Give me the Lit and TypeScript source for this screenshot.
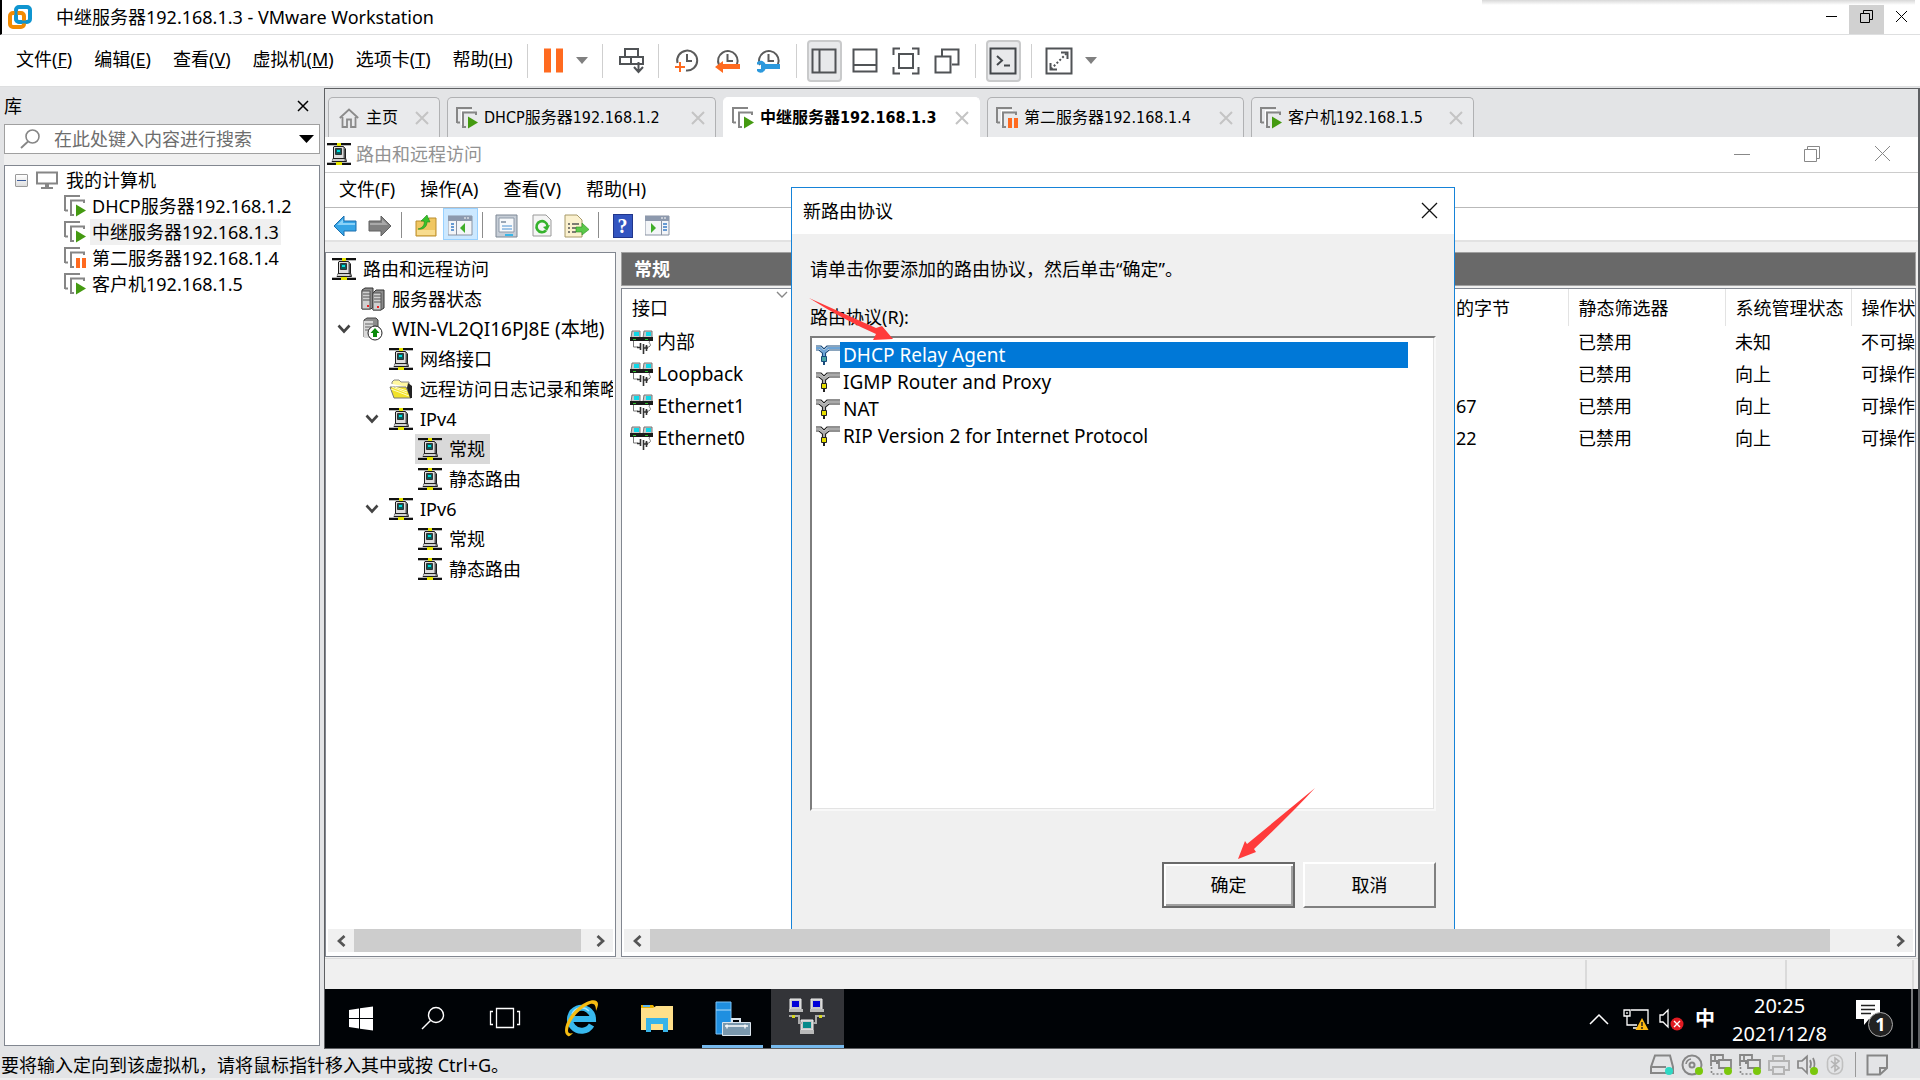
import { LitElement, html, svg, css, nothing } from "lit";
import { customElement, state } from "lit/decorators.js";
import { classMap } from "lit/directives/class-map.js";

type Vm = { name: string; paused?: boolean; width: number };
type Node = { text: string; level: number; icon: string; open?: boolean; id: number };

const VMS: Vm[] = [
  { name: "DHCP服务器192.168.1.2", width: 269 },
  { name: "中继服务器192.168.1.3", width: 257 },
  { name: "第二服务器192.168.1.4", paused: true, width: 257 },
  { name: "客户机192.168.1.5", width: 223 },
];

const NODES: Node[] = [
  { id: 0, text: "路由和远程访问", level: 0, icon: "route" },
  { id: 1, text: "服务器状态", level: 1, icon: "servers" },
  { id: 2, text: "WIN-VL2QI16PJ8E (本地)", level: 1, icon: "host", open: true },
  { id: 3, text: "网络接口", level: 2, icon: "route" },
  { id: 4, text: "远程访问日志记录和策略", level: 2, icon: "folder" },
  { id: 5, text: "IPv4", level: 2, icon: "route", open: true },
  { id: 6, text: "常规", level: 3, icon: "route" },
  { id: 7, text: "静态路由", level: 3, icon: "route" },
  { id: 8, text: "IPv6", level: 2, icon: "route", open: true },
  { id: 9, text: "常规", level: 3, icon: "route" },
  { id: 10, text: "静态路由", level: 3, icon: "route" },
];

const IFACES = [
  ["内部", "", "已禁用", "未知", "不可操作"],
  ["Loopback", "", "已禁用", "向上", "可操作"],
  ["Ethernet1", "67", "已禁用", "向上", "可操作"],
  ["Ethernet0", "22", "已禁用", "向上", "可操作"],
];

const PROTOCOLS = ["DHCP Relay Agent", "IGMP Router and Proxy", "NAT", "RIP Version 2 for Internet Protocol"];

const pic = (w: number, h: number, body: unknown) =>
  html`<svg width=${w} height=${h} viewBox="0 0 ${w} ${h}" fill="none" aria-hidden="true">${body}</svg>`;

const logo = pic(24, 24, svg`
  <rect x="8" y="2" width="14" height="15" rx="3" stroke="#0f95d0" stroke-width="4"/>
  <rect x="2" y="8" width="14" height="14" rx="3" stroke="#f38b00" stroke-width="4"/>
  <path d="M8 6v8a3 3 0 0 0 3 3h7" stroke="#0f95d0" stroke-width="3"/>`);

const cross = (s: number, c: string, w = 1) =>
  pic(s, s, svg`<path d="M1 1L${s - 1} ${s - 1}M${s - 1} 1L1 ${s - 1}" stroke=${c} stroke-width=${w}/>`);
const dash = (s: number, c: string) =>
  pic(s, s, svg`<path d="M0 ${Math.floor(s / 2)}.5H${s}" stroke=${c}/>`);
const restore = (s: number, c: string) =>
  pic(s, s, svg`<path d="M.5 3.5H${s - 4}.5V${s - 1}.5H.5ZM3.5 3V.5H${s - 1}.5V${s - 4}.5H${s - 4}" stroke=${c}/>`);
const triangle = (w: number, h: number, c: string) =>
  pic(w, h, svg`<path d="M0 0H${w}L${w / 2} ${h}Z" fill=${c}/>`);
const chevron = (c: string) =>
  pic(14, 10, svg`<path d="M1.5 1.5L7 7.5L12.5 1.5" stroke=${c} stroke-width="2.6"/>`);

const vmIcon = (paused?: boolean) => pic(22, 22, svg`
  <path d="M1 16V1H16M1 15.500H4M7 21V5.500H21M7 20H10M20 5V8" stroke="#868686" stroke-width="2"/>
  <path d="M5 3H17V4H6V18H5Z" fill="#fff"/>
  ${paused
    ? svg`<path d="M12 11H16V21H12ZM18 11H22V21H18Z" fill="#ff6a1f"/>`
    : svg`<path d="M12 9.500L22 15.500L12 21.500Z" fill="#449a11"/>`}`);

const clock = (extra: unknown) => pic(25, 25, svg`
  <path d="M4 17A9.800 9.800 0 1 1 20 19.500" stroke="#5b5b5b" stroke-width="2"/>
  <path d="M12.500 6V13H18" stroke="#5b5b5b" stroke-width="2"/>${extra}`);

const tool: Record<string, unknown> = {
  pause: pic(20, 25, svg`<path d="M0 .500H7V24.500H0ZM12 .500H19V24.500H12Z" fill="#ff6a1f"/>`),
  send: pic(26, 26, svg`<path d="M6 1H19V9H6ZM1 9H12V16H1ZM12 9H24V16H12ZM19.500 14V23M15 19L19.500 24L24 19" stroke="#505356" stroke-width="2"/>`),
  snap: pic(25, 25, svg`
    <path d="M3.500 15A10 10 0 1 1 12 22.500" stroke="#5b5b5b" stroke-width="2"/>
    <path d="M13 6V13H18" stroke="#5b5b5b" stroke-width="2"/>
    <path d="M6 14V24M1 19H11" stroke="#ff6a1f" stroke-width="2"/>`),
  revert: clock(svg`<path d="M0 19L8 13V16H25V21H8V25Z" fill="#ff6a1f"/>`),
  manage: clock(svg`<path d="M1 14.500A5 5 0 0 1 9.500 16H24V21H9.500A5 5 0 0 1 1 23V21H5V16.500H1Z" fill="#2c99dd"/>`),
  side: pic(26, 26, svg`<path d="M1.500 1.500H24.500V24.500H1.500ZM8.500 1V25" stroke="#505356" stroke-width="2"/>`),
  bottom: pic(26, 26, svg`<path d="M1.500 1.500H24.500V23.500H1.500ZM1 17H25" stroke="#505356" stroke-width="2"/>`),
  full: pic(28, 28, svg`<path d="M1.500 8V1.500H8M20 1.500H26.500V8M26.500 20V26.500H20M8 26.500H1.500V20M7 7H21V21H7Z" stroke="#505356" stroke-width="2"/>`),
  unity: pic(26, 26, svg`<path d="M8 8V1.500H24.500V16.500H18M1.500 8.500H16.500V24.500H1.500Z" stroke="#505356" stroke-width="2"/>`),
  term: pic(28, 28, svg`<path d="M1.500 1.500H26.500V26.500H1.500Z" stroke="#43474b" stroke-width="2"/><path d="M8 9L13 13.500L8 18M15 18.500H21" stroke="#43474b" stroke-width="2"/>`),
  stretch: pic(28, 28, svg`<path d="M1.500 1.500H26.500V26.500H1.500Z" stroke="#505356" stroke-width="2"/><path d="M16 5.500H22.500V12M5.500 16V22.500H12" stroke="#505356" stroke-width="2"/><path d="M6 22L22 6" stroke="#505356" stroke-width="2" stroke-dasharray="2 2"/>`),
};

const home = pic(20, 20, svg`<path d="M.800 10L10 1.500L19.200 10M3.500 9V19H8V11.500H12V19H16.500V9" stroke="#8b8b8b" stroke-width="1.800"/>`);
const glass = (c: string, w = 2) => pic(24, 24, svg`<circle cx="15" cy="9" r="7.500" stroke=${c} stroke-width=${w}/><path d="M9.500 14.500L1 23" stroke=${c} stroke-width=${w}/>`);
const monitor = pic(22, 18, svg`<path d="M1 1.500H21V12.500H1Z" stroke="#868686" stroke-width="2"/><path d="M9 13H13V16H17V18H5V16H9Z" fill="#868686"/>`);

const route = pic(24, 22, svg`
  <path d="M0 0H24V2H0ZM0 20H24V22H0Z" fill="#111"/><path d="M0 2H24V3H0ZM0 19H24V20H0Z" fill="#b9b9b9"/>
  <path d="M10 0H14V3H10ZM9 19H15V22H9Z" fill="#e6e600"/>
  <path d="M7 3.500H16.500L18.500 6V15L19.500 18.500H5L6.500 15V4Z" fill="#9a9a9a" stroke="#1d1d1d"/>
  <path d="M7 4H16V15H7Z" fill="#dedede"/><path d="M8.500 5.500H14.500V11.500H8.500Z" fill="#0a5a5a" stroke="#333"/><path d="M10 7H13V9H10Z" fill="#0dd"/>
  <path d="M6 16H17V18H5Z" fill="#d0d0d0"/><path d="M6 15.500H18" stroke="#222"/><path d="M17.500 6V15" stroke="#555"/>`);

const icons: Record<string, unknown> = {
  route,
  servers: pic(24, 24, svg`
    <path d="M1 3L4 1H12V20L10 22H1ZM12 6L15 3H23V21L20 23H12Z" fill="#8c8c8c" stroke="#333"/>
    <path d="M1 4H9V22H1ZM12 6H20V23H12Z" fill="#d0d0d0" stroke="#555"/><path d="M2 7H9M2 10H9M2 13H9M13 9H20M13 12H20M13 15H20" stroke="#555"/>
    <path d="M6 18H8V20H6ZM16 19H18V21H16Z" fill="#e22"/>`),
  host: pic(20, 24, svg`
    <path d="M1 3L4 1H13L15 3V20H1Z" fill="#8c8c8c" stroke="#444"/><path d="M1 4H10V21H1Z" fill="#d9d9d9"/><path d="M2 7H10M2 10H8M2 13H6" stroke="#666"/>
    <circle cx="12" cy="16" r="7" fill="#fff" stroke="#222"/><path d="M12 11L16.500 16H14V20H10V16H7.500Z" fill="#0a8a0a"/>`),
  folder: pic(24, 20, svg`
    <path d="M3 5V3L5 1H10L12 3H20V8" fill="#fff7a0" stroke="#888"/>
    <path d="M1 8H17L22 19H5Z" fill="#f1e22a" stroke="#777"/><path d="M2 10L20 17M3 8L18 14M6 8L18 12" stroke="#fffbc0"/>
    <path d="M19 4L23 7V19H21L18 9Z" fill="#222"/>`),
};

const nic = pic(24, 24, svg`
  <path d="M2 1H10V8H1ZM14 1H22V8H13Z" fill="#c9c9c9" stroke="#777"/><path d="M4 2H9V6H4ZM16 2H21V6H16Z" fill="#10d8e8"/>
  <path d="M0 7H23V11H0Z" fill="#1b1b1b"/><path d="M3 9H6V10H3ZM15 9H18V10H15Z" fill="#2fc12f"/>
  <path d="M3.500 11V17H8M20 11C17 13 23 14 19 17H15" stroke="#777"/><path d="M7 17.500H11M10.500 13V20M13.500 14V24M14 18H18M16.500 15V21" stroke="#333" stroke-width="1.600"/>`);

const protoIcon = (sel: boolean) => {
  const d = sel ? "#174a7c" : "#222", g = sel ? "#6ba3d6" : "#aaa", y = sel ? "#4aa5a5" : "#e6de00";
  return pic(24, 20, svg`
    <path d="M0 1H5L8 4L11 1H24M0 5H3L6.500 8V12M24 5H13L9.500 8V12" stroke=${d} stroke-width="1.200"/>
    <path d="M0 3H4L8 7L12 3H24M8 7V12" stroke=${g} stroke-width="2"/>
    <path d="M5.500 11.500H10.500V16.500H5.500Z" fill=${y} stroke=${d}/><path d="M7 17H9V20H7Z" fill=${d}/>`);
};

const win = svg`<path d="M0 1H24V20H0Z" fill="#f3f5f8" stroke="#8a93a3"/><path d="M0 1H24V6H0Z" fill="#8d99ad"/><path d="M16 3H18M19 3H21" stroke="#fff"/>`;
const mmc: Record<string, unknown> = {
  back: pic(24, 22, svg`<path d="M1 11L11 1V6H23V16H11V21Z" fill="#36a5e6" stroke="#1c6fae"/><path d="M4 10L10 4V8H22V10Z" fill="#8ad2f8"/>`),
  fwd: pic(24, 22, svg`<path d="M23 11L13 1V6H1V16H13V21Z" fill="#808080" stroke="#606060"/><path d="M20 10L14 4V8H2V10Z" fill="#a9a9a9"/>`),
  up: pic(22, 22, svg`<path d="M1 6H12L14 3H21V21H1Z" fill="#f0c661" stroke="#b98d2e"/><path d="M2 15H20V20H2Z" fill="#f8dc8e"/><path d="M3 14C8 13 10 9 9 6H6L12 0L15 7H12C12 12 8 15 3 14Z" fill="#38c22a" stroke="#23861b" stroke-width=".600"/>`),
  tree: pic(25, 21, svg`${win}<path d="M8.500 6V20" stroke="#8a93a3"/><path d="M3 9H6M3 12H6M3 15H6" stroke="#3a7cc5" stroke-width="1.500"/><path d="M12 13L17 8V18Z" fill="#3fae2a"/>`),
  props: pic(23, 24, svg`<path d="M1 1H22V23H1Z" fill="#c6cdd6" stroke="#7d8794"/><path d="M4 4H19V18H4Z" fill="#f7f9fb" stroke="#8d99a8"/><path d="M6 7H11V9H6Z" fill="#9aa7b6"/><path d="M7 12H17M7 15H17" stroke="#4a90d0"/><path d="M10 20H18V22H10Z" fill="#37b6e8"/>`),
  refresh: pic(20, 23, svg`<path d="M1 1H14L19 6V22H1Z" fill="#f5f5f5" stroke="#999"/><path d="M14 16.500A5.500 5.500 0 1 1 15.500 12" stroke="#35b32c" stroke-width="2.600"/><path d="M18 11L15 17L11 13Z" fill="#35b32c"/>`),
  exportList: pic(25, 24, svg`<path d="M1 1H13L18 6V23H1Z" fill="#fbf1cf" stroke="#a89a68"/><path d="M4 10H6M4 14H6M4 18H6M8 10H15M8 14H12M8 18H12" stroke="#555" stroke-width="1.500"/><path d="M12 13H18V9L25 15.500L18 21V18H12Z" fill="#5cc94a" stroke="#2d9023" stroke-width=".600"/>`),
  help: html`<span class="help">?</span>`,
  action: pic(25, 21, svg`${win}<path d="M16.500 6V20" stroke="#8a93a3"/><path d="M18 9H22M18 12H22M18 15H22" stroke="#3a7cc5" stroke-width="1.500"/><path d="M6 8L11 13L6 18Z" fill="#3fae2a"/>`),
};

const task: Record<string, unknown> = {
  start: pic(25, 25, svg`<path d="M0 4L10 2.500V12H0ZM11 2.300L24 .500V12H11ZM0 13H10V22.500L0 21ZM11 13H24V24.500L11 22.700Z" fill="#fff"/>`),
  search: glass("#fff", 1.4),
  view: pic(32, 22, svg`<path d="M7.500 1.500H24.500V20.500H7.500ZM4 4.500H1.500V17.500H4M28 4.500H30.500V17.500H28" stroke="#fff" stroke-width="1.300"/>`),
  ie: pic(36, 38, svg`
    <path d="M28.500 26A11.500 11.500 0 1 1 30 20H10" stroke="#38b9ee" stroke-width="6"/>
    <path d="M9 15A10.500 10.500 0 0 1 26 12" stroke="#a4e6ff" stroke-width="1.500"/>
    <path d="M5 37C-2 34 4 17 16 8C25 0 35-1 35 5C35 7 34 9 33 12C33 6 31 3 25 6C13 12 5 25 5 32C5 34 7 35 10 34C8 36 6 38 5 37Z" fill="#f6bd12"/>`),
  files: pic(33, 28, svg`<path d="M0 1H12L14 4H0Z" fill="#e9b200"/><path d="M0 4H12L15 2H32V26H0Z" fill="#ffe08a"/><path d="M2 2H9" stroke="#5bb6f0" stroke-width="2"/><path d="M5 14H27V28H22V20H10V28H5Z" fill="#37b4e9"/>`),
  server: pic(36, 35, svg`<path d="M1 1H16V33H1Z" fill="#1f8fe0" stroke="#7cc3f5"/><path d="M1 9H16" stroke="#b5def9"/><path d="M17 22V18H25V22" stroke="#dce6ee" stroke-width="2"/><path d="M7.500 21.500H35.500V34.500H7.500Z" fill="#7a98ad" stroke="#dce6ee"/><path d="M10 25H33M12 23.500V27.500M30 23.500V27.500" stroke="#fff" stroke-width="1.300"/>`),
  rras: pic(37, 36, svg`
    <path d="M1 1H12V12H1ZM22 1H33V12H22ZM12 22H24V32H12Z" fill="#c8c8c8" stroke="#eee"/>
    <path d="M3 3H10V9H3ZM24 3H31V9H24Z" fill="#0000d8"/><path d="M14 24H22V30H14Z" fill="#068a8a"/>
    <path d="M0 11H14V14H0ZM21 11H35V14H21ZM11 32H25V36H11Z" fill="#b9b9b9"/>
    <path d="M0 18H10V25H13M36 18H27V25H24" stroke="#aaa" stroke-width="2"/><path d="M3 17H6V20H3ZM30 17H33V20H30Z" fill="#d8d820"/>`),
};

const dot = (x: number, y: number, c = "#7ac70c") => svg`<circle cx=${x} cy=${y} r="4" fill=${c}/>`;
const netDev = pic(23, 22, svg`<path d="M1 12V1H13V4M5 6V1M9 7H1M9 6H21V14H9ZM13 1V6M6 9H9" stroke="#868686" stroke-width="1.800"/><path d="M1.500 13V20H13" stroke="#868686" stroke-width="1.600" stroke-dasharray="2 2"/>${dot(18, 17)}`);
const devices = [
  pic(25, 22, svg`<path d="M5 1.500H20L23 13V19H1V13ZM1 13H16" stroke="#868686" stroke-width="2"/>${dot(19, 17, "#2fd8c4")}`),
  pic(23, 22, svg`<circle cx="11" cy="11" r="9.500" stroke="#868686" stroke-width="2"/><circle cx="11" cy="11" r="2.500" stroke="#868686" stroke-width="2"/><path d="M5 10A6 6 0 0 1 10 5" stroke="#868686" stroke-width="1.600"/>${dot(18, 17)}`),
  netDev,
  netDev,
  pic(23, 20, svg`<path d="M5 6V1H16V6M5 15H1V6H21V15H16M5 12H16V19H5Z" stroke="#b4b4b4" stroke-width="2"/>`),
  pic(23, 22, svg`<path d="M1 7H5L10 2.500V19L5 14H1ZM13 6Q15 10 13 14M16 4Q19 10 16 16" stroke="#868686" stroke-width="1.700"/>${dot(17, 17)}`),
  pic(18, 21, svg`<rect x="1.500" y="1" width="15" height="19" rx="7" stroke="#c0c0c0" stroke-width="1.600"/><path d="M5 7L13 14L9 17V4L13 7L5 14" stroke="#b4b4b4" stroke-width="1.600"/>`),
];

@customElement("app-root")
export class AppRoot extends LitElement {
  @state() private active = 1;
  @state() private node = 6;
  @state() private proto = 0;

  static styles = css`
    :host {
      --ui: "Noto Sans", "Noto Sans CJK SC", sans-serif;
      display: flex; flex-direction: column; min-height: 100vh; background: #fff; color: #000;
      font-family: var(--ui); font-size: 18px; line-height: 26px; overflow: hidden;
    }
    * { box-sizing: border-box; }
    svg { display: block; flex: none; }
    button { font: inherit; color: inherit; background: none; border: 0; padding: 0; display: flex; align-items: center; justify-content: center; white-space: nowrap; }
    ul { list-style: none; margin: 0; padding: 0; }
    .grow { flex: 1; }
    .titlebar { display: flex; align-items: stretch; height: 35px; border-bottom: 1px solid #dedfe0; border-left: 2px solid #000; padding-left: 6px; padding-right: 1px; position: relative; }
    .titlebar .name { display: flex; align-items: center; gap: 24px; }
    .titlebar button { width: 35px; padding-bottom: 1px; }
    .titlebar .lit { background: #d1d1d1; }
    .shade { position: absolute; top: 0; right: 5px; width: 433px; height: 5px; background: linear-gradient(#d8d8d8, #fff); }
    .menubar { display: flex; align-items: center; height: 52px; padding-left: 16px; border-bottom: 1px solid #dedfe0; }
    .menus { display: flex; gap: 22px; padding-bottom: 3px; }
    .rule { width: 1px; height: 34px; background: #cfcfcf; flex: none; }
    .tools { display: flex; align-items: center; padding-left: 14px; }
    .tools .rule { margin: 0 10px 0 7px; }
    .tools .rule.start { margin-left: 0; }
    .tools .rule.close { margin-right: 7px; }
    .tools .cell { width: 41px; height: 42px; }
    .tools .pair { gap: 12px; padding: 0 7px 0 6px; }
    .tools .pressed { width: 35px; margin-right: 3px; background: #e8e9eb; border: 2px solid #c9cacb; border-radius: 4px; }
    .tools .wide { width: 38px; }
    .main { display: flex; flex: 1; min-height: 0; background: #e3e4e6; }
    .library { width: 324px; flex: none; display: flex; flex-direction: column; padding: 0 4px 3px; }
    .lib-head { height: 37px; display: flex; align-items: center; justify-content: space-between; padding-right: 11px; }
    .search { height: 30px; border: 1px solid #a0a0a0; background: #fff; display: flex; align-items: center; padding: 0 5px 0 15px; gap: 14px; flex: none; }
    .search input { flex: 1; min-width: 0; border: 0; outline: 0; padding: 0; font: inherit; background: none; }
    .search input::placeholder { color: #6d6d6d; opacity: 1; }
    .strip { height: 11px; background: #f0f0f0; flex: none; }
    .lib-tree { flex: 1; background: #fff; border: 1px solid #828790; padding-top: 1px; }
    .lib-row { display: flex; align-items: center; height: 26px; padding-left: 59px; gap: 4px; white-space: nowrap; }
    .lib-row span { padding: 0 2px; }
    .lib-row.root { padding-left: 10px; gap: 8px; }
    .lib-row.root span { padding: 0; }
    .lib-row .chosen { background: #f0f0f0; }
    .minus { width: 13px; height: 13px; border: 1px solid #9a9a9a; background: linear-gradient(#fff, #ddd); border-radius: 1px; }
    .minus::before { content: ""; width: 9px; height: 1px; background: #3a5a9a; }
    .stage { flex: 1; min-width: 0; margin-top: 1px; border: 1px solid #5e6063; border-right-width: 2px; display: flex; flex-direction: column; }
    .tabs { height: 48px; display: flex; align-items: flex-end; gap: 7px; padding-left: 3px; font-family: "DejaVu Sans Condensed", "Noto Sans CJK SC", sans-serif; font-size: 16px; }
    .tab { height: 40px; display: flex; align-items: center; gap: 6px; padding: 0 10px 0 8px; border: 1px solid #b0b1b3; border-bottom: 0; border-radius: 5px 5px 0 0; background: #e9eaec; white-space: nowrap; }
    .tab.on { background: #fff; border-color: #fff; font-weight: bold; }
    .tab.home { width: 112px; padding-left: 10px; gap: 7px; }
    .guest { position: relative; flex: 1; display: flex; flex-direction: column; min-height: 0; background: #f0f0f0; }
    .g-title { height: 36px; background: #fff; border-bottom: 1px solid #ccc; display: flex; align-items: center; padding: 0 1px 2px 2px; color: #929292; }
    .g-title .caption { padding-left: 5px; }
    .g-title button { width: 70px; }
    .g-menu { height: 35px; background: #fff; border-bottom: 1px solid #b9b9b9; display: flex; align-items: center; gap: 25px; padding: 0 0 2px 14px; }
    .g-tools { height: 34px; background: #fff; border-bottom: 2px solid #e2e2e2; display: flex; align-items: center; padding-left: 2px; }
    .g-tools button { width: 35px; height: 32px; padding-top: 3px; }
    .g-tools .sunk { background: #cce8ff; border: 1px solid #99d1ff; }
    .g-tools .rule { height: 26px; background: #8c8c8c; margin: 2px 6px 0 4px; }
    .help { width: 20px; height: 24px; background: #3355c0; border: 1px solid #21368c; color: #fff; font: bold 20px/22px "Liberation Serif", serif; text-align: center; }
    .panes { flex: 1; min-height: 0; display: flex; gap: 5px; padding: 10px 2px 1px 0; }
    .box { background: #fff; border: 1px solid #828790; display: flex; flex-direction: column; min-width: 0; overflow: hidden; padding: 1px 2px 4px; }
    .nav { width: 291px; flex: none; }
    .nav ul { flex: 1; overflow: hidden; }
    .n-row { height: 30px; display: flex; align-items: center; white-space: nowrap; }
    .n-row .twist { width: 28px; flex: none; display: flex; justify-content: center; }
    .n-row .label { display: flex; align-items: center; height: 30px; padding: 0 5px 0 3px; gap: 7px; }
    .n-row .picto { width: 24px; display: flex; justify-content: center; }
    .n-row .chosen { background: #d9d9d9; }
    .n-row.host, .ifname, .d-list { font-size: 19px; }
    .lv0 .twist { display: none; }
    .n-row.lv0 { padding-left: 1px; }
    .lv1 { padding-left: 2px; }
    .lv2 { padding-left: 30px; }
    .lv3 { padding-left: 59px; }
    .scroll { height: 23px; flex: none; background: #f0f0f0; display: flex; }
    .scroll .arrow { width: 26px; }
    .scroll .thumb { background: #cdcdcd; flex: 1; }
    .scroll .rest { width: 6px; }
    .scroll .rest.far { width: 57px; }
    .detail { flex: 1; min-width: 0; display: flex; flex-direction: column; gap: 2px; }
    .detail h2 { margin: 0; height: 34px; background: #696969; border: 1px solid #a0a0a0; color: #fff; font-size: 18px; line-height: 32px; padding-left: 12px; }
    .detail .box { flex: 1; padding: 0 0 4px; }
    .detail .scroll { margin: 0 2px; }
    .detail .sheet { flex: 1; overflow: hidden; }
    table { width: 100%; table-layout: fixed; border-collapse: collapse; }
    th, td { padding: 0 0 0 10px; font-weight: normal; text-align: left; white-space: nowrap; overflow: hidden; }
    th { height: 37px; position: relative; border-right: 1px solid #e3e3e3; }
    th:nth-child(1), th:nth-child(2), th:last-child { border-right: 0; }
    td { height: 32px; padding-bottom: 1px; }
    td:first-child { padding-left: 8px; }
    .sort { position: absolute; top: 2px; left: 154px; }
    .ifname { display: flex; align-items: center; gap: 3px; }
    .g-status { height: 31px; border-top: 1px solid #dcdcdc; display: flex; justify-content: flex-end; padding: 1px 4px 0 0; }
    .g-status span { border-left: 2px solid #dadada; width: 200px; }
    .g-status span:nth-child(2) { width: 129px; border-right: 2px solid #dadada; }
    .taskbar { height: 59px; background: #000306; display: flex; align-items: stretch; color: #fff; padding-right: 5px; }
    .taskbar .task { width: 72px; border-bottom: 3px solid transparent; padding-top: 2px; }
    .taskbar .slot { width: 80px; }
    .taskbar .running { width: 61px; border-color: #76b9ed; margin: 0 8px 0 9px; }
    .taskbar .front { width: 73px; background: #333438; border-color: #76b9ed; padding: 0 0 2px; }
    .tray { display: flex; align-items: center; gap: 10px; }
    .ime { font-size: 20px; }
    .clock { text-align: center; line-height: 28px; font-size: 20px; padding: 3px 19px 0 17px; }
    .note { position: relative; width: 37px; height: 37px; margin: 0 18px 0 10px; }
    .badge { position: absolute; left: 12px; top: 12px; width: 25px; height: 25px; border: 1px solid #aaa; border-radius: 50%; background: #222; font-size: 18px; font-weight: bold; line-height: 22px; text-align: center; }
    .edge { width: 2px; background: #77797b; }
    .dialog { position: absolute; left: 466px; top: 50px; width: 664px; height: 742px; background: #f0f0f0; border: 1px solid #1683d8; border-bottom: 0; display: flex; flex-direction: column; }
    .d-title { height: 46px; background: #fff; display: flex; align-items: center; justify-content: space-between; padding: 0 16px 1px 11px; flex: none; }
    .d-body { flex: 1; display: flex; flex-direction: column; padding: 22px 18px 21px; }
    .d-body p, .d-body label { margin: 0; line-height: 26px; }
    .d-body p { margin-bottom: 22px; }
    .d-list { margin-top: 6px; height: 475px; background: #fff; border: 2px solid; border-color: #7d7d7d #f8f8f8 #f8f8f8 #7d7d7d; box-shadow: inset -1px -1px #e3e3e3; padding: 3px 26px 0 4px; }
    .d-list li { height: 27px; display: flex; align-items: center; }
    .d-list li span { flex: 1; padding-left: 3px; line-height: 26px; }
    .d-list .picked { background: #0078d7; color: #fff; }
    .d-actions { margin-top: auto; display: flex; justify-content: flex-end; gap: 8px; }
    .push { width: 133px; height: 46px; background: #f0f0f0; border: 2px solid; border-color: #fff #808080 #808080 #fff; }
    .push.primary { border-color: #696969; box-shadow: inset 2px 2px #fff, inset -2px -2px #a0a0a0; }
    .mark { position: absolute; fill: #ff3b3b; }
    .m1 { left: 17px; top: 110px; }
    .m2 { left: 446px; top: 599px; }
    .statusbar { height: 31px; background: #e3e4e6; border-bottom: 2px solid #efefef; display: flex; align-items: center; padding: 2px 31px 0 1px; }
    .devs { display: flex; align-items: center; gap: 6px; }
    .devs .rule { height: 25px; margin: 0 4px 0 5px; background: #999; }
  `;

  private menu(label: string, key: string) {
    return html`<button>${label}(<u>${key}</u>)</button>`;
  }

  private scrollbar(far: boolean) {
    return html`<div class="scroll">
      <button class="arrow" aria-label="向左">${pic(9, 12, svg`<path d="M7.500 1L2 6L7.500 11" stroke="#555" stroke-width="2.800"/>`)}</button>
      <div class="thumb"></div><div class="rest ${far ? "far" : ""}"></div>
      <button class="arrow" aria-label="向右">${pic(9, 12, svg`<path d="M1.500 1L7 6L1.500 11" stroke="#555" stroke-width="2.800"/>`)}</button>
    </div>`;
  }

  private tool(name: string, cls = "") {
    return html`<button class="cell ${cls}" aria-label=${name}>${tool[name]}</button>`;
  }

  private mmcTool(name: string, cls = "") {
    return html`<button class=${cls} aria-label=${name}>${mmc[name]}</button>`;
  }

  private renderLibrary() {
    return html`<aside class="library">
      <div class="lib-head"><span>库</span><button aria-label="关闭">${cross(12, "#000", 1.5)}</button></div>
      <div class="search">
        ${pic(20, 20, svg`<circle cx="12.500" cy="7.500" r="6.500" stroke="#868686" stroke-width="1.600"/><path d="M8 12.500L1 19" stroke="#868686" stroke-width="1.800"/>`)}
        <input aria-label="搜索" placeholder="在此处键入内容进行搜索">
        <button aria-label="展开">${triangle(15, 8, "#000")}</button>
      </div>
      <div class="strip"></div>
      <ul class="lib-tree">
        <li class="lib-row root"><button class="minus" aria-label="折叠"></button>${monitor}<span>我的计算机</span></li>
        ${VMS.map((v, i) => html`<li class="lib-row">${vmIcon(v.paused)}<span class=${classMap({ chosen: i === this.active })}>${v.name}</span></li>`)}
      </ul>
    </aside>`;
  }

  private renderTabs() {
    return html`<div class="tabs">
      <div class="tab home">${home}<span>主页</span><span class="grow"></span>${cross(14, "#c4c4c4", 2)}</div>
      ${VMS.map((v, i) => html`<div class="tab ${i === this.active ? "on" : ""}" style="width:${v.width}px" @click=${() => (this.active = i)}>
        ${vmIcon(v.paused)}<span>${v.name}</span><span class="grow"></span><button aria-label="关闭">${cross(14, "#c4c4c4", 2)}</button>
      </div>`)}
    </div>`;
  }

  private renderDetail() {
    return html`<section class="detail">
      <h2>常规</h2>
      <div class="box">
        <div class="sheet"><table>
          <colgroup><col width="320"><col><col width="122"><col width="157"><col width="126"><col width="64"></colgroup>
          <thead><tr>
            <th>接口<span class="sort">${pic(12, 7, svg`<path d="M1 1L6 6L11 1" stroke="#888" stroke-width="1.400"/>`)}</span></th>
            <th></th><th>的字节</th><th>静态筛选器</th><th>系统管理状态</th><th>操作状态</th>
          </tr></thead>
          <tbody>${IFACES.map(([name, bytes, filter, admin, oper]) => html`<tr>
            <td><span class="ifname">${nic}${name}</span></td><td></td><td>${bytes}</td><td>${filter}</td><td>${admin}</td><td>${oper}</td>
          </tr>`)}</tbody>
        </table></div>
        ${this.scrollbar(true)}
      </div>
    </section>`;
  }

  private renderDialog() {
    return html`<div class="dialog" role="dialog" aria-labelledby="dt">
      <div class="d-title"><span id="dt">新路由协议</span><button aria-label="关闭">${cross(17, "#111", 1.3)}</button></div>
      <div class="d-body">
        <p>请单击你要添加的路由协议，然后单击“确定”。</p>
        <label id="pl">路由协议(R):</label>
        <ul class="d-list" role="listbox" aria-labelledby="pl">
          ${PROTOCOLS.map((p, i) => html`<li role="option" aria-selected=${i === this.proto} @click=${() => (this.proto = i)}>
            ${protoIcon(i === this.proto)}<span class=${classMap({ picked: i === this.proto })}>${p}</span></li>`)}
        </ul>
        <div class="d-actions"><button class="push primary">确定</button><button class="push">取消</button></div>
      </div>
      <svg class="mark m1" width="86" height="44" viewBox="0 0 86 44"><path d="M0 0L67 30L73 28L84 41L64 42L67 36Q35 22 0 0Z"/></svg>
      <svg class="mark m2" width="78" height="74" viewBox="0 0 78 74"><path d="M77 1L9 57L7 54L0 72L18 65L16 62Q55 25 77 1Z"/></svg>
    </div>`;
  }

  private renderTaskbar() {
    return html`<div class="taskbar">
      <button class="task" aria-label="开始">${task.start}</button>
      <button class="task" aria-label="搜索">${task.search}</button>
      <button class="task" aria-label="任务视图">${task.view}</button>
      <button class="task slot" aria-label="Internet Explorer">${task.ie}</button>
      <button class="task" aria-label="文件资源管理器">${task.files}</button>
      <button class="task running" aria-label="服务器管理器">${task.server}</button>
      <button class="task front" aria-label="路由和远程访问">${task.rras}</button>
      <span class="grow"></span>
      <div class="tray">
        ${pic(24, 12, svg`<path d="M1 11L10 2L19 11" stroke="#fff" stroke-width="1.500"/>`)}
        ${pic(26, 24, svg`<path d="M8 3H25V17M7 3H1V9H7ZM4 9V18H14M4 5V7M10 21H16" stroke="#fff" stroke-width="1.300"/><path d="M19 11L25.500 23H12.500Z" fill="#fdb913"/><path d="M19 15V19M19 20V22" stroke="#222" stroke-width="1.500"/>`)}
        ${pic(26, 24, svg`<path d="M1 8H4L9 3V20L4 15H1Z" stroke="#fff" stroke-width="1.300"/><circle cx="18" cy="17" r="6.500" fill="#e11b22"/><path d="M15 14L21 20M21 14L15 20" stroke="#fff" stroke-width="1.400"/>`)}
        <b class="ime">中</b>
      </div>
      <div class="clock">20:25<br>2021/12/8</div>
      <div class="tray"><div class="note">${pic(25, 26, svg`<path d="M0 0H24V19H13L8 25V19H0Z" fill="#fff"/><path d="M5 5.500H19M5 9.500H19M5 13.500H15" stroke="#222" stroke-width="1.300"/>`)}<span class="badge">1</span></div></div>
      <span class="edge"></span>
    </div>`;
  }

  render() {
    return html`
      <header class="titlebar">
        <div class="name">${logo}<span>中继服务器192.168.1.3 - VMware Workstation</span></div>
        <span class="grow"></span><span class="shade"></span>
        <button aria-label="最小化">${dash(11, "#000")}</button>
        <button class="lit" aria-label="还原">${restore(13, "#000")}</button>
        <button aria-label="关闭">${cross(13, "#000")}</button>
      </header>
      <nav class="menubar">
        <div class="menus">
          ${this.menu("文件", "F")}${this.menu("编辑", "E")}${this.menu("查看", "V")}
          ${this.menu("虚拟机", "M")}${this.menu("选项卡", "T")}${this.menu("帮助", "H")}
        </div>
        <div class="tools">
          <span class="rule start"></span>
          <button class="pair" aria-label="暂停">${tool.pause}${triangle(12, 7, "#808080")}</button>
          <span class="rule"></span>${this.tool("send", "wide")}<span class="rule close"></span>
          ${this.tool("snap")}${this.tool("revert")}${this.tool("manage")}
          <span class="rule"></span>${this.tool("side", "pressed")}${this.tool("bottom")}${this.tool("full")}${this.tool("unity")}
          <span class="rule"></span>${this.tool("term", "pressed")}<span class="rule close"></span>
          <button class="pair" aria-label="拉伸">${tool.stretch}${triangle(12, 7, "#808080")}</button>
        </div>
      </nav>
      <div class="main">
        ${this.renderLibrary()}
        <div class="stage">
          ${this.renderTabs()}
          <div class="guest">
            <div class="g-title">${route}<span class="caption">路由和远程访问</span><span class="grow"></span>
              <button aria-label="最小化">${dash(16, "#888")}</button>
              <button aria-label="还原">${restore(16, "#888")}</button>
              <button aria-label="关闭">${cross(17, "#888")}</button>
            </div>
            <div class="g-menu"><button>文件(F)</button><button>操作(A)</button><button>查看(V)</button><button>帮助(H)</button></div>
            <div class="g-tools">
              ${this.mmcTool("back")}${this.mmcTool("fwd")}<span class="rule"></span>
              ${this.mmcTool("up")}${this.mmcTool("tree", "sunk")}<span class="rule"></span>
              ${this.mmcTool("props")}${this.mmcTool("refresh")}${this.mmcTool("exportList")}<span class="rule"></span>
              ${this.mmcTool("help")}${this.mmcTool("action")}
            </div>
            <div class="panes">
              <div class="box nav">
                <ul>${NODES.map((n) => html`<li class="n-row lv${n.level} ${n.icon}" @click=${() => (this.node = n.id)}>
                  <span class="twist">${n.open ? chevron("#444") : nothing}</span>
                  <span class=${classMap({ label: true, chosen: n.id === this.node })}><span class="picto">${icons[n.icon]}</span>${n.text}</span>
                </li>`)}</ul>
                ${this.scrollbar(false)}
              </div>
              ${this.renderDetail()}
            </div>
            <div class="g-status"><span></span><span></span></div>
            ${this.renderTaskbar()}
            ${this.renderDialog()}
          </div>
        </div>
      </div>
      <footer class="statusbar">
        <span>要将输入定向到该虚拟机，请将鼠标指针移入其中或按 Ctrl+G。</span><span class="grow"></span>
        <div class="devs">${devices}<span class="rule"></span>${pic(23, 22, svg`<path d="M1.500 1.500H21V14L14 20.500H1.500ZM21 14H14V20" stroke="#868686" stroke-width="2"/>`)}</div>
      </footer>`;
  }
}
